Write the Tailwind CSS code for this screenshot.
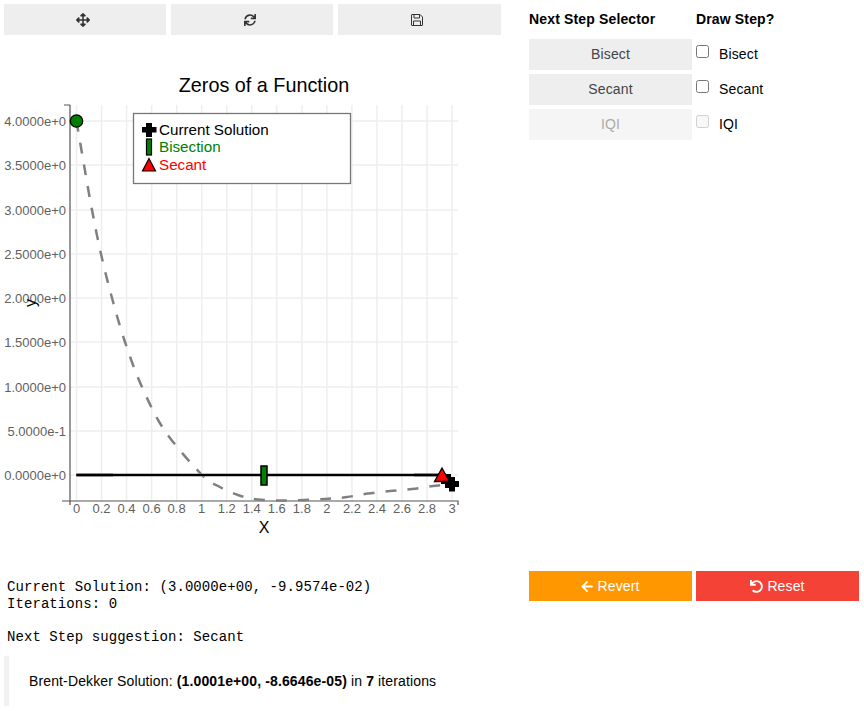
<!DOCTYPE html>
<html lang="en">

<head>
  <meta charset="UTF-8">
  <title>Zeros of a Function</title>
  <script src="https://cdn.jsdelivr.net/npm/@tailwindcss/browser@4"></script>
</head>

<body class="bg-white font-['Liberation_Sans',Arial,sans-serif] text-[14px] tracking-[0.13px] text-black">
  <div class="flex w-[864px] h-[711px] overflow-hidden">

    <!-- left column: toolbar, plot, status -->
    <div class="w-[505px] shrink-0">
      <div class="grid grid-cols-[162px_162px_163px] gap-[5px] pl-1 pt-1">
        <button class="h-[31px] bg-[#eeeeee] flex items-center justify-center pr-1">
          <svg width="14" height="14" viewBox="0 0 512 512" fill="#333"><path d="M352.201 425.775l-79.196 79.196c-9.373 9.373-24.568 9.373-33.941 0l-79.196-79.196c-15.119-15.119-4.411-40.971 16.971-40.97h51.162L228 284H127.196v51.162c0 21.382-25.851 32.09-40.971 16.971L7.029 272.937c-9.373-9.373-9.373-24.569 0-33.941L86.225 159.8c15.119-15.119 40.971-4.411 40.971 16.971V228H228V127.196h-51.23c-21.382 0-32.09-25.851-16.971-40.971l79.196-79.196c9.373-9.373 24.568-9.373 33.941 0l79.196 79.196c15.119 15.119 4.411 40.971-16.971 40.971h-51.162V228h100.804v-51.162c0-21.382 25.851-32.09 40.97-16.971l79.196 79.196c9.373 9.373 9.373 24.569 0 33.941L425.773 352.2c-15.119 15.119-40.971 4.411-40.97-16.971V284H284v100.804h51.23c21.382 0 32.09 25.851 16.971 40.971z"/></svg>
        </button>
        <button class="h-[31px] bg-[#eeeeee] flex items-center justify-center pr-1">
          <svg width="12" height="12" viewBox="0 0 512 512" fill="#333"><path d="M440.65 12.57l4 82.77A247.16 247.16 0 0 0 255.83 8C134.73 8 33.91 94.92 12.29 209.82A12 12 0 0 0 24.09 224h49.05a12 12 0 0 0 11.67-9.26 175.91 175.91 0 0 1 317-56.94l-101.46-4.86a12 12 0 0 0-12.57 12v47.41a12 12 0 0 0 12 12H500a12 12 0 0 0 12-12V12a12 12 0 0 0-12-12h-47.37a12 12 0 0 0-11.98 12.57zM255.83 432a175.61 175.61 0 0 1-146-77.8l101.8 4.87a12 12 0 0 0 12.57-12v-47.4a12 12 0 0 0-12-12H12a12 12 0 0 0-12 12V500a12 12 0 0 0 12 12h47.35a12 12 0 0 0 12-12.6l-4.15-82.57A247.17 247.17 0 0 0 255.83 504c121.11 0 221.93-86.92 243.55-201.82a12 12 0 0 0-11.8-14.18h-49.05a12 12 0 0 0-11.67 9.26A175.86 175.86 0 0 1 255.83 432z"/></svg>
        </button>
        <button class="h-[31px] bg-[#eeeeee] flex items-center justify-center pr-[5px]">
          <svg width="12" height="12" viewBox="0 0 12 12" fill="none" stroke="#333" stroke-width="1"><path d="M1 .5h8l2.5 2.500v8a.5.5 0 0 1-.5.5H1a.5.5 0 0 1-.5-.5V1a.5.5 0 0 1 .5-.5z"/><path d="M3 .5v3.500h5.500V.500M2.500 11.500V7h7v4.500"/></svg>
        </button>
      </div>

      <svg id="plot" class="block" width="505" height="535" viewBox="0 35 505 535" font-family="'Liberation Sans', Arial, sans-serif" letter-spacing="0">
        <g id="grid" stroke="#eeeeee" stroke-width="1.500"></g>
        <path d="M70 105H64M70 105V505M62 501H458V505M70 501V505" fill="none" stroke="#555" stroke-width="1.200"/>
        <g id="ticks" font-size="13" fill="#5f5f5f"></g>
        <path id="curve" fill="none" stroke="#808080" stroke-width="2.500" stroke-dasharray="11 11"/>
        <path d="M76.500 475H446" stroke="#808080" stroke-width="3"/>
        <path d="M76.500 475H446" stroke="#000" stroke-width="2"/>
        <path d="M76.500 475H113M414 475H446" stroke="#000" stroke-width="2.600"/>
        <text x="264" y="92" text-anchor="middle" font-size="19.800" fill="#000">Zeros of a Function</text>
        <text x="264" y="533" text-anchor="middle" font-size="16" fill="#000">X</text>
        <text transform="translate(36 303) rotate(-90)" text-anchor="middle" font-size="16" fill="#000">y</text>

        <!-- markers -->
        <circle cx="76.500" cy="121" r="6.200" fill="#008000" stroke="#000" stroke-width="1.300"/>
        <rect x="261" y="466" width="6" height="19" fill="#008000" stroke="#000" stroke-width="1.500"/>
        <path d="M445 474h6v4h4v6h-4v4h-6v-4h-4v-6h4z" fill="#000"/>
        <path d="M449 477h6v4h4v6h-4v4.500h-6V487h-4v-6h4z" fill="#000"/>
        <path d="M442 468L434.500 481.500H449.500Z" fill="#ff0000" stroke="#000" stroke-width="1.300"/>

        <!-- legend -->
        <rect x="133.500" y="113.500" width="217" height="70" fill="#fff" stroke="#777" stroke-width="1.300"/>
        <path d="M146 123h6v4h4.500v5.500H152v4.500h-6v-4.500h-4V127h4z" fill="#000"/>
        <rect x="146.500" y="139" width="5" height="16" fill="#008000" stroke="#000" stroke-width="1.200"/>
        <path d="M149 158.500L142.500 171H155.500Z" fill="#ff0000" stroke="#000" stroke-width="1.200"/>
        <text x="159" y="135" font-size="15.200" fill="#000">Current Solution</text>
        <text x="159" y="152" font-size="15.200" fill="#008000">Bisection</text>
        <text x="159" y="170" font-size="15.200" fill="#ff0000">Secant</text>
      </svg>

      <div class="mt-[9px] px-[7px] font-['DejaVu_Sans_Mono',monospace] text-[14px] leading-[17px] tracking-[0.07px]">
        <pre>Current Solution: (3.0000e+00, -9.9574e-02)
Iterations: 0</pre>
        <pre class="mt-4">Next Step suggestion: Secant</pre>
      </div>
      <div class="ml-1 mt-[10px] w-[496px] h-[50px] border-l-[5px] border-[#f1f1f1] pl-5 flex items-center">
        <p>Brent-Dekker Solution: <b>(1.0001e+00, -8.6646e-05)</b> in <b>7</b> iterations</p>
      </div>
    </div>

    <!-- right column: step selector -->
    <div class="ml-6 w-[330px] shrink-0 flex flex-col">
      <div class="grid grid-cols-2 gap-x-1 h-[39px] items-center font-bold tracking-[0.15px]">
        <div>Next Step Selector</div>
        <div>Draw Step?</div>
      </div>
      <div class="grid grid-cols-2 gap-x-1 gap-y-1">
        <button class="h-[31px] bg-[#eeeeee] text-[#444]">Bisect</button>
        <label class="flex items-center gap-[10px]"><input type="checkbox" class="w-[13px] h-[13px] -mt-[6px]"><span>Bisect</span></label>
        <button class="h-[31px] bg-[#eeeeee] text-[#444]">Secant</button>
        <label class="flex items-center gap-[10px]"><input type="checkbox" class="w-[13px] h-[13px] -mt-[6px]"><span>Secant</span></label>
        <button disabled class="h-[31px] bg-[#f5f5f5] text-[#aaaaaa]">IQI</button>
        <label class="flex items-center gap-[10px]"><input type="checkbox" disabled class="w-[13px] h-[13px] -mt-[6px]"><span>IQI</span></label>
      </div>
      <div class="grid grid-cols-2 gap-x-1 mt-[431px]">
        <button class="h-[30px] bg-[#ff9800] text-white flex items-center justify-center gap-1">
          <svg width="12" height="13" viewBox="0 0 448 512" fill="#fff"><path d="M257.5 445.100l-22.200 22.200c-9.400 9.400-24.600 9.400-33.900 0L7 273c-9.400-9.400-9.400-24.600 0-33.900L201.400 44.700c9.400-9.400 24.600-9.400 33.900 0l22.200 22.200c9.500 9.500 9.300 25-.4 34.300L136.600 216H424c13.300 0 24 10.700 24 24v32c0 13.300-10.700 24-24 24H136.600l120.500 114.800c9.800 9.300 10 24.800.4 34.300z"/></svg>
          <span>Revert</span>
        </button>
        <button class="h-[30px] bg-[#f44336] text-white flex items-center justify-center gap-1">
          <svg width="13" height="13" viewBox="0 0 512 512" fill="#fff"><path d="M212.333 224.333H12c-6.627 0-12-5.373-12-12V12C0 5.373 5.373 0 12 0h48c6.627 0 12 5.373 12 12v78.112C117.773 39.279 184.260 7.470 258.175 8.007c136.906.994 246.448 111.623 246.157 248.532C504.041 393.258 393.120 504 256.333 504c-64.089 0-122.496-24.313-166.510-64.215-5.099-4.622-5.334-12.554-.467-17.420l33.967-33.967c4.474-4.474 11.662-4.717 16.401-.525C170.800 415.336 211.614 432 256.333 432c97.268 0 176-78.716 176-176 0-97.267-78.716-176-176-176-58.496 0-110.280 28.476-142.274 72.333h98.274c6.627 0 12 5.373 12 12v48c0 6.627-5.373 12-12 12z"/></svg>
          <span>Reset</span>
        </button>
      </div>
    </div>
  </div>

  <script>
    // plot scales, same as the axes in the picture
    var sx = function (x) { return 76.5 + x * 125.2; };
    var sy = function (y) { return 475 - y * 88.5; };
    var NS = 'http://www.w3.org/2000/svg';

    function add(parent, tag, attrs, text) {
      var el = document.createElementNS(NS, tag);
      for (var k in attrs) el.setAttribute(k, attrs[k]);
      if (text) el.textContent = text;
      parent.appendChild(el);
    }

    var grid = document.getElementById('grid');
    var ticks = document.getElementById('ticks');

    var xLabels = ['0', '0.2', '0.4', '0.6', '0.8', '1', '1.2', '1.4', '1.6', '1.8', '2', '2.2', '2.4', '2.6', '2.8', '3'];
    xLabels.forEach(function (label) {
      var x = sx(parseFloat(label));
      add(grid, 'path', { d: 'M' + x + ' 105V501' });
      add(ticks, 'text', { x: x, y: 513, 'text-anchor': 'middle' }, label);
    });

    var yLabels = ['4.0000e+0', '3.5000e+0', '3.0000e+0', '2.5000e+0', '2.0000e+0', '1.5000e+0', '1.0000e+0', '5.0000e-1', '0.0000e+0'];
    yLabels.forEach(function (label) {
      var y = Math.round(sy(parseFloat(label)));
      add(grid, 'path', { d: 'M70 ' + y + 'H458' });
      add(ticks, 'text', { x: 66, y: y + 4.5, 'text-anchor': 'end' }, label);
    });

    // curve read off the plot, smoothed with catmull-rom
    var pts = [[76.5, 121], [84, 165], [92, 210], [101, 254], [112, 298], [125, 342], [142, 387], [165, 431], [202, 475],
      [218, 486], [238, 495], [258, 499.5], [285, 500.5], [325, 499], [347, 497], [368, 493.5], [390, 491], [412, 489], [433, 486], [452, 484]];
    var d = 'M' + pts[0].join(' ');
    for (var i = 0; i < pts.length - 1; i++) {
      var p0 = pts[Math.max(i - 1, 0)], p1 = pts[i], p2 = pts[i + 1], p3 = pts[Math.min(i + 2, pts.length - 1)];
      d += 'C' + (p1[0] + (p2[0] - p0[0]) / 6) + ' ' + (p1[1] + (p2[1] - p0[1]) / 6) + ' ' +
        (p2[0] - (p3[0] - p1[0]) / 6) + ' ' + (p2[1] - (p3[1] - p1[1]) / 6) + ' ' + p2[0] + ' ' + p2[1];
    }
    document.getElementById('curve').setAttribute('d', d);
  </script>
</body>

</html>
